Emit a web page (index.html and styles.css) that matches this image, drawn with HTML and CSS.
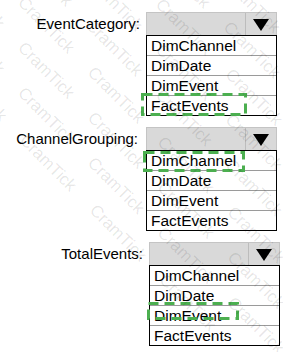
FILE: index.html
```html
<!DOCTYPE html>
<html lang="en">
    <head>
        <meta charset="UTF-8" />
        <title>Dropdown answers</title>
        <link rel="stylesheet" href="styles.css">
    </head>
    <body>
        <div class="page">
            <div class="field field-category">
                <span class="label">EventCategory:</span>
                <div class="combo">
                    <div class="select">
                        <span class="select-value"></span>
                        <span class="select-button"><span class="arrow"></span></span>
                    </div>
                    <ul class="options">
                        <li>DimChannel</li>
                        <li>DimDate</li>
                        <li>DimEvent</li>
                        <li class="answer">FactEvents
                            <svg class="mark mark-category" width="106" height="23">
                                <rect x="1.5" y="1.5" width="103" height="20" />
                            </svg>
                        </li>
                    </ul>
                </div>
            </div>

            <div class="field field-grouping">
                <span class="label">ChannelGrouping:</span>
                <div class="combo">
                    <div class="select">
                        <span class="select-value"></span>
                        <span class="select-button"><span class="arrow"></span></span>
                    </div>
                    <ul class="options">
                        <li class="answer">DimChannel
                            <svg class="mark mark-grouping" width="102" height="21">
                                <rect x="1.5" y="1.5" width="99" height="18" />
                            </svg>
                        </li>
                        <li>DimDate</li>
                        <li>DimEvent</li>
                        <li>FactEvents</li>
                    </ul>
                </div>
            </div>

            <div class="field field-total">
                <span class="label">TotalEvents:</span>
                <div class="combo">
                    <div class="select">
                        <span class="select-value"></span>
                        <span class="select-button"><span class="arrow"></span></span>
                    </div>
                    <ul class="options">
                        <li>DimChannel</li>
                        <li>DimDate</li>
                        <li class="answer">DimEvent
                            <svg class="mark mark-total" width="92" height="18">
                                <rect x="1.5" y="1.5" width="89" height="15" />
                            </svg>
                        </li>
                        <li>FactEvents</li>
                    </ul>
                </div>
            </div>

            <div class="watermark" aria-hidden="true">
                <div class="watermark-inner">
                    <p>CramTick CramTick CramTick CramTick CramTick CramTick</p>
                    <p>CramTick CramTick CramTick CramTick CramTick CramTick</p>
                    <p>CramTick CramTick CramTick CramTick CramTick CramTick</p>
                    <p>CramTick CramTick CramTick CramTick CramTick CramTick</p>
                    <p>CramTick CramTick CramTick CramTick CramTick CramTick</p>
                    <p>CramTick CramTick CramTick CramTick CramTick CramTick</p>
                    <p>CramTick CramTick CramTick CramTick CramTick CramTick</p>
                    <p>CramTick CramTick CramTick CramTick CramTick CramTick</p>
                    <p>CramTick CramTick CramTick CramTick CramTick CramTick</p>
                    <p>CramTick CramTick CramTick CramTick CramTick CramTick</p>
                    <p>CramTick CramTick CramTick CramTick CramTick CramTick</p>
                    <p>CramTick CramTick CramTick CramTick CramTick CramTick</p>
                    <p>CramTick CramTick CramTick CramTick CramTick CramTick</p>
                    <p>CramTick CramTick CramTick CramTick CramTick CramTick</p>
                    <p>CramTick CramTick CramTick CramTick CramTick CramTick</p>
                    <p>CramTick CramTick CramTick CramTick CramTick CramTick</p>
                </div>
            </div>
        </div>
    </body>
</html>
```

FILE: styles.css
```css
body {
    margin: 0;
    background: #fff;
    font-family: 'Liberation Sans', Arial, sans-serif;
    color: #000;
}

.page {
    position: relative;
    width: 283px;
    height: 352px;
    overflow: hidden;
    padding-top: 12px;
    box-sizing: border-box;
    display: flex;
    flex-direction: column;
    gap: 11px;
}

.field {
    display: flex;
    align-items: flex-start;
}

.label {
    font-size: 15px;
    height: 23px;
    line-height: 23px;
    text-align: right;
    flex: none;
}

.field-category .label {
    width: 140px;
    margin-right: 6px;
}

.field-grouping .label {
    width: 138px;
    margin-right: 8px;
}

.field-total .label {
    width: 143px;
    margin-right: 6px;
}

.combo {
    width: 131px;
}

.select {
    display: flex;
    height: 23px;
    box-sizing: border-box;
    border: 1px solid #c4c4c4;
    border-bottom: none;
    background: #d9d9d9;
}

.select-value {
    flex: 1;
}

.select-button {
    width: 30px;
    border-left: 1px solid #bcbcbc;
    display: flex;
    align-items: center;
    justify-content: center;
}

.arrow {
    width: 0;
    height: 0;
    border-left: 8px solid transparent;
    border-right: 8px solid transparent;
    border-top: 12px solid #000;
    margin-top: 2px;
}

.options {
    list-style: none;
    margin: 0;
    padding: 0;
    border: 1px solid #000;
    background: #fff;
}

.options li {
    position: relative;
    height: 19px;
    line-height: 19px;
    padding-left: 4px;
    font-size: 15.5px;
    border-bottom: 1px solid #9a9a9a;
}

.options li:last-child {
    border-bottom: none;
}

.mark {
    position: absolute;
    pointer-events: none;
    z-index: 2;
}

.mark rect {
    fill: none;
    stroke: #4caf50;
    stroke-width: 3;
    stroke-dasharray: 10 6;
}

.mark-category {
    left: -6px;
    top: -3px;
}

.mark-grouping {
    left: -4px;
    top: 0;
}

.mark-total {
    left: -3px;
    top: -4px;
}

.watermark {
    position: absolute;
    inset: 0;
    pointer-events: none;
    overflow: hidden;
    z-index: 3;
}

.watermark-inner {
    position: absolute;
    left: -120px;
    top: -250px;
    width: 700px;
    transform: rotate(45deg);
    transform-origin: center;
    color: rgba(0, 0, 0, 0.1);
    font-size: 17px;
}

.watermark-inner p {
    margin: 0;
    white-space: nowrap;
    line-height: 32px;
    word-spacing: 22px;
}

.watermark-inner p:nth-child(3n + 2) {
    padding-left: 32px;
}

.watermark-inner p:nth-child(3n) {
    padding-left: 64px;
}
```
